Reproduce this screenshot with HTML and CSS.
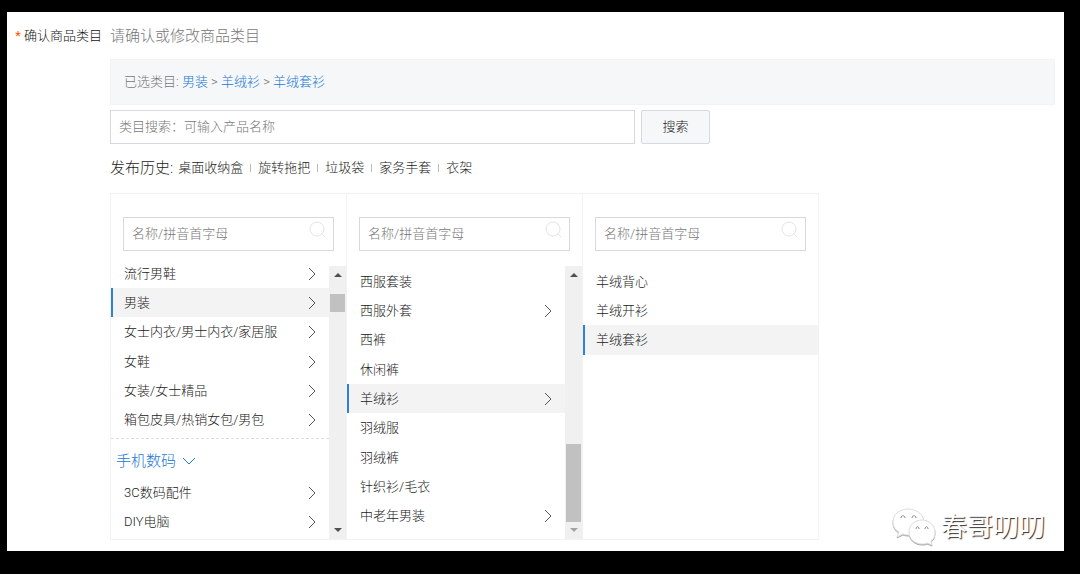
FILE: index.html
```
<!DOCTYPE html>
<html lang="zh-CN">
<head>
    <meta charset="UTF-8">
    <meta name="viewport" content="width=device-width, initial-scale=1.0">
    <title>确认商品类目</title>
    <link rel="stylesheet" href="styles.css">
</head>
<body>
    <svg class="symbols" aria-hidden="true">
        <symbol id="arrow" viewBox="0 0 8 14"><path d="M1 1l6 6-6 6"/></symbol>
        <symbol id="search" viewBox="0 0 18 18"><circle cx="8" cy="8" r="7"/><path d="M13 13l3 3"/></symbol>
    </svg>

    <main class="page">
        <div class="form-label"><span class="required">*</span> 确认商品类目</div>

        <div class="form-content">
            <h1>请确认或修改商品类目</h1>

            <nav class="selected">
                已选类目: <a href="#">男装</a> &gt; <a href="#">羊绒衫</a> &gt; <a href="#">羊绒套衫</a>
            </nav>

            <form class="search">
                <input type="text" aria-label="类目搜索" placeholder="类目搜索：可输入产品名称">
                <button type="button">搜索</button>
            </form>

            <div class="history">
                <span class="history-title">发布历史:</span>
                <a href="#">桌面收纳盒</a>
                <a href="#">旋转拖把</a>
                <a href="#">垃圾袋</a>
                <a href="#">家务手套</a>
                <a href="#">衣架</a>
            </div>

            <div class="panel">
                <section class="column">
                    <div class="filter">
                        <input type="text" aria-label="一级类目" placeholder="名称/拼音首字母">
                        <svg><use href="#search"/></svg>
                    </div>
                    <div class="list">
                        <div class="items scrolled">
                            <ul>
                                <li><a href="#">流行男鞋<svg><use href="#arrow"/></svg></a></li>
                                <li class="active"><a href="#">男装<svg><use href="#arrow"/></svg></a></li>
                                <li><a href="#">女士内衣/男士内衣/家居服<svg><use href="#arrow"/></svg></a></li>
                                <li><a href="#">女鞋<svg><use href="#arrow"/></svg></a></li>
                                <li><a href="#">女装/女士精品<svg><use href="#arrow"/></svg></a></li>
                                <li><a href="#">箱包皮具/热销女包/男包<svg><use href="#arrow"/></svg></a></li>
                            </ul>
                            <button type="button" class="group">手机数码
                                <svg viewBox="0 0 14 8"><path d="M1 1l6 6 6-6"/></svg>
                            </button>
                            <ul>
                                <li><a href="#">3C数码配件<svg><use href="#arrow"/></svg></a></li>
                                <li><a href="#">DIY电脑<svg><use href="#arrow"/></svg></a></li>
                            </ul>
                        </div>
                        <div class="scrollbar">
                            <span class="up"></span>
                            <div class="track"><div class="thumb thumb-top"></div></div>
                            <span class="down"></span>
                        </div>
                    </div>
                </section>

                <section class="column">
                    <div class="filter">
                        <input type="text" aria-label="二级类目" placeholder="名称/拼音首字母">
                        <svg><use href="#search"/></svg>
                    </div>
                    <div class="list">
                        <div class="items">
                            <ul>
                                <li><a href="#">西服套装</a></li>
                                <li><a href="#">西服外套<svg><use href="#arrow"/></svg></a></li>
                                <li><a href="#">西裤</a></li>
                                <li><a href="#">休闲裤</a></li>
                                <li class="active"><a href="#">羊绒衫<svg><use href="#arrow"/></svg></a></li>
                                <li><a href="#">羽绒服</a></li>
                                <li><a href="#">羽绒裤</a></li>
                                <li><a href="#">针织衫/毛衣</a></li>
                                <li><a href="#">中老年男装<svg><use href="#arrow"/></svg></a></li>
                            </ul>
                        </div>
                        <div class="scrollbar">
                            <span class="up"></span>
                            <div class="track"><div class="thumb thumb-bottom"></div></div>
                            <span class="down end"></span>
                        </div>
                    </div>
                </section>

                <section class="column">
                    <div class="filter">
                        <input type="text" aria-label="三级类目" placeholder="名称/拼音首字母">
                        <svg><use href="#search"/></svg>
                    </div>
                    <div class="list">
                        <div class="items">
                            <ul>
                                <li><a href="#">羊绒背心</a></li>
                                <li><a href="#">羊绒开衫</a></li>
                                <li class="active"><a href="#">羊绒套衫</a></li>
                            </ul>
                        </div>
                    </div>
                </section>
            </div>
        </div>

        <div class="watermark">
            <svg viewBox="0 0 46 40">
                <path d="M17 2C8 2 2 8 2 15c0 4 2 8 6 10l-2 5 6-3c2 1 4 1 6 1 8 0 15-6 15-13S26 2 17 2z"/>
                <path d="M31 13c-7 0-13 5-13 12s6 12 13 12c2 0 4 0 5-1l5 2-1-4c3-2 4-5 4-9 0-7-6-12-13-12z"/>
                <path class="eyes" d="M10 11c0-3 4-3 4 0M21 11c0-3 4-3 4 0M25 22c0-3 3-3 3 0M34 22c0-3 3-3 3 0"/>
            </svg>
            春哥叨叨
        </div>
    </main>
</body>
</html>
```
FILE: styles.css
```
* {
    box-sizing: border-box;
}

body {
    margin: 0;
    padding: 12px 16px 23px 7px;
    background: #000;
    color: #222;
    font-family: Roboto, "Noto Sans CJK SC", sans-serif;
    font-size: 13px;
    font-weight: 300;
    line-height: 24px;
}

a {
    color: inherit;
    text-decoration: none;
}

input,
button {
    font: inherit;
    color: inherit;
}

ul {
    list-style: none;
    margin: 0;
    padding: 0;
}

svg {
    fill: none;
    stroke: currentColor;
}

.symbols {
    display: none;
}

.page {
    position: relative;
    display: flex;
    gap: 8px;
    padding: 12px 9px 11px 0;
    background: #fff;
}

.form-label {
    flex: 0 0 95px;
    text-align: right;
    white-space: nowrap;
    color: #111;
}

.required {
    color: #f50;
    font-weight: 400;
}

.form-content {
    flex: 1;
    min-width: 0;
}

h1 {
    margin: 0 0 11px;
    font-size: 15px;
    font-weight: 300;
    color: #777;
}

.selected {
    padding: 10px 13px;
    border: 1px solid #f2f3f4;
    background: #f6f7f9;
    color: #777;
}

.selected a {
    color: #2277d4;
}

/* search */
.search {
    display: flex;
    gap: 6px;
    max-width: 600px;
    margin: 5px 0 12px;
}

input {
    width: 100%;
    height: 34px;
    padding: 0 8px 2px;
    border: 1px solid #d8d9e0;
    background: #fff;
    outline: none;
}

input::placeholder {
    color: #777;
    opacity: 1;
}

.search button {
    flex: 0 0 69px;
    padding: 0;
    border: 1px solid #d8d9e0;
    border-radius: 2px;
    background: #f6f7f9;
    cursor: pointer;
}

/* history */
.history {
    display: flex;
    align-items: center;
    margin-bottom: 13px;
}

.history-title {
    margin-right: 5px;
    font-size: 15px;
}

.history a + a::before {
    content: "";
    display: inline-block;
    height: 8px;
    margin: 0 7px;
    border-left: 1px solid #bbb;
}

/* category columns */
.panel {
    display: flex;
    max-width: 709px;
    border: 1px solid #f2f2f2;
}

.column {
    flex: 1;
    min-width: 0;
}

.column + .column {
    border-left: 1px solid #f2f2f2;
}

.filter {
    position: relative;
    margin: 23px 12px 15px;
}

.filter input {
    display: block;
}

.filter svg {
    position: absolute;
    top: 4px;
    right: 7px;
    width: 18px;
    height: 18px;
    color: #e4e4e4;
}

.list {
    display: flex;
    height: 273px;
}

.items {
    flex: 1;
    display: flex;
    flex-direction: column;
    padding-top: 1px;
}

.scrolled {
    justify-content: flex-end;
    padding-bottom: 3px;
}

.items li {
    flex: none;
    height: 29px;
    border-left: 2px solid transparent;
}

.items li:nth-child(3n) {
    height: 30px;
}

.items li a {
    display: flex;
    align-items: center;
    justify-content: space-between;
    height: 100%;
    padding: 0 13px 0 11px;
}

.items li svg {
    width: 8px;
    height: 14px;
    color: #555;
}

.items .active {
    border-left-color: #2f80d8;
    background: #f3f3f3;
}

.group {
    flex: none;
    display: flex;
    align-items: center;
    gap: 6px;
    height: 40px;
    margin-top: 3px;
    padding: 4px 5px 0;
    border: 0;
    border-top: 1px dashed #ddd;
    background: none;
    color: #2277d4;
    font-size: 15px;
    cursor: pointer;
}

.group svg {
    width: 14px;
    height: 8px;
}

.scrollbar {
    flex: 0 0 17px;
    display: flex;
    flex-direction: column;
    align-items: center;
    justify-content: space-between;
    padding: 7px 1px;
    background: #f0f0f0;
}

.up,
.down {
    border: 4px solid transparent;
}

.up {
    border-top: 0;
    border-bottom-color: #505050;
}

.down {
    border-bottom: 0;
    border-top-color: #505050;
}

.down.end {
    border-top-color: #a3a3a3;
}

.track {
    display: flex;
    flex-direction: column;
    flex: 1;
    width: 100%;
}

.thumb {
    background: #c1c1c1;
}

.thumb-top {
    height: 18px;
    margin-top: 17px;
}

.thumb-bottom {
    height: 78px;
    margin-top: auto;
    margin-bottom: 6px;
}

/* account mark */
.watermark {
    position: absolute;
    right: 19px;
    bottom: 4px;
    display: flex;
    align-items: center;
    gap: 4px;
    color: #fff;
    font-size: 26px;
    font-weight: 400;
    line-height: 40px;
    text-shadow: 1px 1px 1px #333;
}

.watermark svg {
    width: 46px;
    height: 40px;
    fill: #fff;
    stroke: #ddd;
    filter: drop-shadow(0 1px 0 #aaa);
}

.watermark .eyes {
    fill: none;
    stroke: #888;
}
```
